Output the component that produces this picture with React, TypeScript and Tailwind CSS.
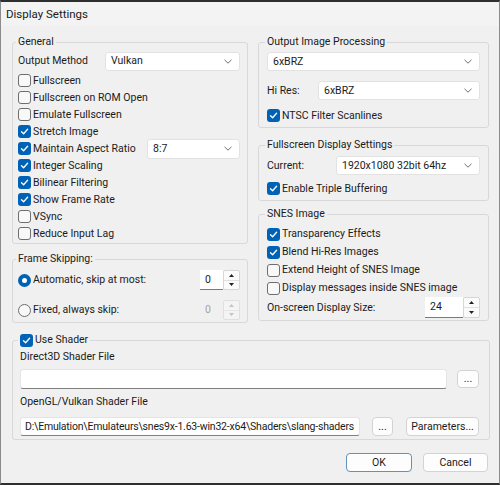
import React from 'react';

// Display Settings dialog – Windows 11 style controls

const ui = "font-['Roboto',sans-serif] text-[10.5px] leading-[16px] text-[#1b1b1b]";

const CheckMark = () => (
  <svg width="9" height="9" viewBox="0 0 9 9" fill="none">
    <path d="M1.5 4.8 L3.6 6.8 L7.6 2.2" stroke="white" strokeWidth="1.3" strokeLinecap="round" strokeLinejoin="round" />
  </svg>
);

const Box = ({ checked }: { checked: boolean }) =>
  checked ? (
    <span className="w-[13px] h-[13px] shrink-0 rounded-[3px] bg-[#0062b5] flex items-center justify-center">
      <CheckMark />
    </span>
  ) : (
    <span className="w-[13px] h-[13px] shrink-0 rounded-[3px] border border-[#6e6e6e] bg-[#f8f8f8]" />
  );

const Check = ({ label, checked = false, h = 'h-[17px]' }: { label: string; checked?: boolean; h?: string }) => (
  <div className={`flex items-center gap-[2px] ${h}`}>
    <Box checked={checked} />
    <span className="whitespace-nowrap">{label}</span>
  </div>
);

const Radio = ({ checked }: { checked: boolean }) =>
  checked ? (
    <span className="w-[13px] h-[13px] shrink-0 rounded-full bg-[#0062b5] flex items-center justify-center">
      <span className="w-[5px] h-[5px] rounded-full bg-white" />
    </span>
  ) : (
    <span className="w-[13px] h-[13px] shrink-0 rounded-full border border-[#6e6e6e] bg-[#f8f8f8]" />
  );

const Chevron = () => (
  <svg width="8" height="5" viewBox="0 0 8 5" fill="none">
    <path d="M0.5 0.8 L4 4.2 L7.5 0.8" stroke="#707070" strokeWidth="1" />
  </svg>
);

const Select = ({ value, w, h = 'h-[19px]' }: { value: string; w: string; h?: string }) => (
  <div className={`${w} ${h} bg-white border border-[#e2e2e2] rounded-[3px] flex items-center justify-between pl-[5px] pr-[7px]`}>
    <span className="whitespace-nowrap">{value}</span>
    <Chevron />
  </div>
);

const Tri = ({ up, color }: { up: boolean; color: string }) => (
  <svg width="5" height="3" viewBox="0 0 5 3">
    <path d={up ? 'M0 3 L2.5 0 L5 3 Z' : 'M0 0 L2.5 3 L5 0 Z'} fill={color} />
  </svg>
);

const Spinner = ({ value, w, disabled = false, h = 'h-[20px]' }: { value: string; w: string; disabled?: boolean; h?: string }) => (
  <div className={`flex ${h}`}>
    <div
      className={`${w} h-full pl-[5px] flex items-center ${
        disabled ? 'bg-[#f0f0f0] text-[#a3a3a3]' : 'bg-white border-b border-[#7a7a7a]'
      }`}
    >
      {value}
    </div>
    <div className={`w-[17px] h-full flex flex-col border rounded-[2px] ${disabled ? 'border-[#e0e0e0] bg-[#f4f4f4]' : 'border-[#d6d6d6] bg-[#fbfbfb]'}`}>
      <div className="flex-1 flex items-center justify-center">
        <Tri up color={disabled ? '#c4c4c4' : '#222'} />
      </div>
      <div className={`flex-1 flex items-center justify-center border-t ${disabled ? 'border-[#e6e6e6]' : 'border-[#e0e0e0]'}`}>
        <Tri up={false} color={disabled ? '#c4c4c4' : '#222'} />
      </div>
    </div>
  </div>
);

const Field = ({ value = '', w }: { value?: string; w: string }) => (
  <div className={`${w} shrink-0 bg-white border border-[#e4e4e4] border-b-[#808080] rounded-[3px] pl-[4px] flex items-center overflow-hidden`}>
    <span className="whitespace-nowrap tracking-[-0.2px]">{value}</span>
  </div>
);

const Button = ({ label, w, h = 'h-[19px]', primary = false }: { label: string; w: string; h?: string; primary?: boolean }) => (
  <div
    className={`${w} ${h} shrink-0 rounded-[4px] flex items-center justify-center bg-[#fdfdfd] border whitespace-nowrap ${
      primary ? 'border-[#5f92bd]' : 'border-[#d3d3d3]'
    }`}
  >
    {label}
  </div>
);

const Group = ({ title, className = '', children }: { title: React.ReactNode; className?: string; children: React.ReactNode }) => (
  <fieldset className={`border border-[#d8d8d8] rounded-[3px] ${className}`}>
    <legend className="h-[16px] px-[2px] -ml-[2px] flex items-center">{title}</legend>
    {children}
  </fieldset>
);

export default function App() {
  return (
    <div className={`${ui} w-[500px] h-[485px] bg-[#f0f0f0] border-t-2 border-b-2 border-x border-t-[#2f2f2f] border-b-[#2f2f2f] border-x-[#8c8c8c] flex flex-col`}>
      {/* title bar */}
      <div className="h-[24px] pl-[5px] flex items-center bg-[#f3f3f3] text-[11.5px]">Display Settings</div>

      <div className="flex gap-[10px] pl-[11px] mt-[8px]">
        {/* left column */}
        <div className="w-[236px] flex flex-col">
          <Group title="General" className="pl-[5px] pr-[7px] pt-[1px] pb-[1px]">
            <div className="h-[20px] flex items-center justify-between">
              <span>Output Method</span>
              <Select value="Vulkan" w="w-[135px]" />
            </div>
            <div className="mt-[1px]">
              <Check label="Fullscreen" />
            </div>
            <Check label="Fullscreen on ROM Open" />
            <Check label="Emulate Fullscreen" />
            <Check label="Stretch Image" checked />
            <div className="h-[17px] flex items-center justify-between">
              <Check label="Maintain Aspect Ratio" checked />
              <Select value="8:7" w="w-[93px]" h="h-[20px]" />
            </div>
            <Check label="Integer Scaling" checked />
            <Check label="Bilinear Filtering" checked />
            <Check label="Show Frame Rate" checked />
            <Check label="VSync" />
            <Check label="Reduce Input Lag" />
          </Group>

          <Group title="Frame Skipping:" className="mt-[7px] pl-[5px] pr-[7px] pt-[3px] pb-[2px] flex flex-col gap-[10px]">
            <div className="h-[20px] flex items-center justify-between">
              <div className="flex items-center gap-[2px]">
                <Radio checked />
                <span>Automatic, skip at most:</span>
              </div>
              <Spinner value="0" w="w-[23px]" />
            </div>
            <div className="h-[20px] flex items-center justify-between">
              <div className="flex items-center gap-[2px]">
                <Radio checked={false} />
                <span>Fixed, always skip:</span>
              </div>
              <Spinner value="0" w="w-[23px]" disabled />
            </div>
          </Group>
        </div>

        {/* right column */}
        <div className="w-[231px] flex flex-col">
          <Group title="Output Image Processing" className="pl-[8px] pr-[8px] pt-[2px] pb-[3px]">
            <Select value="6xBRZ" w="w-full" />
            <div className="mt-[10px] h-[19px] flex items-center">
              <span className="w-[51px]">Hi Res:</span>
              <Select value="6xBRZ" w="flex-1" />
            </div>
            <div className="mt-[7px]">
              <Check label="NTSC Filter Scanlines" checked />
            </div>
          </Group>

          <Group title="Fullscreen Display Settings" className="mt-[9px] pl-[8px] pr-[8px] pt-[3px] pb-[3px]">
            <div className="h-[19px] flex items-center">
              <span className="w-[69px]">Current:</span>
              <Select value="1920x1080 32bit 64hz" w="flex-1" />
            </div>
            <div className="mt-[5px]">
              <Check label="Enable Triple Buffering" checked />
            </div>
          </Group>

          <Group title="SNES Image" className="mt-[5px] pl-[8px] pr-[8px] pt-[3px] pb-[2px]">
            <Check label="Transparency Effects" checked h="h-[18px]" />
            <Check label="Blend Hi-Res Images" checked h="h-[18px]" />
            <Check label="Extend Height of SNES Image" h="h-[18px]" />
            <Check label="Display messages inside SNES image" h="h-[18px]" />
            <div className="h-[21px] flex items-center justify-between">
              <span>On-screen Display Size:</span>
              <Spinner value="24" w="w-[38px]" h="h-[21px]" />
            </div>
          </Group>
        </div>
      </div>

      {/* shader files */}
      <Group
        title={
          <span className="flex items-center gap-[2px]">
            <Box checked />
            <span>Use Shader</span>
          </span>
        }
        className="ml-[11px] w-[478px] mt-[9px] pl-[7px] pr-[10px] pb-[3px]"
      >
        <div className="h-[18px] flex items-center">Direct3D Shader File</div>
        <div className="mt-[3px] h-[20px] flex items-center justify-between">
          <Field w="w-[427px] h-[20px]" />
          <Button label="..." w="w-[22px]" h="h-[18px]" />
        </div>
        <div className="mt-[4px] h-[18px] flex items-center">OpenGL/Vulkan Shader File</div>
        <div className="mt-[6px] h-[19px] flex items-center">
          <Field value="D:\Emulation\Emulateurs\snes9x-1.63-win32-x64\Shaders\slang-shaders" w="w-[340px] h-[19px]" />
          <div className="ml-[12px]">
            <Button label="..." w="w-[21px]" />
          </div>
          <div className="ml-[13px]">
            <Button label="Parameters..." w="w-[73px]" />
          </div>
        </div>
      </Group>

      <div className="mt-[13px] flex justify-end gap-[11px] pr-[11px]">
        <Button label="OK" w="w-[66px]" primary />
        <Button label="Cancel" w="w-[65px]" />
      </div>
    </div>
  );
}
